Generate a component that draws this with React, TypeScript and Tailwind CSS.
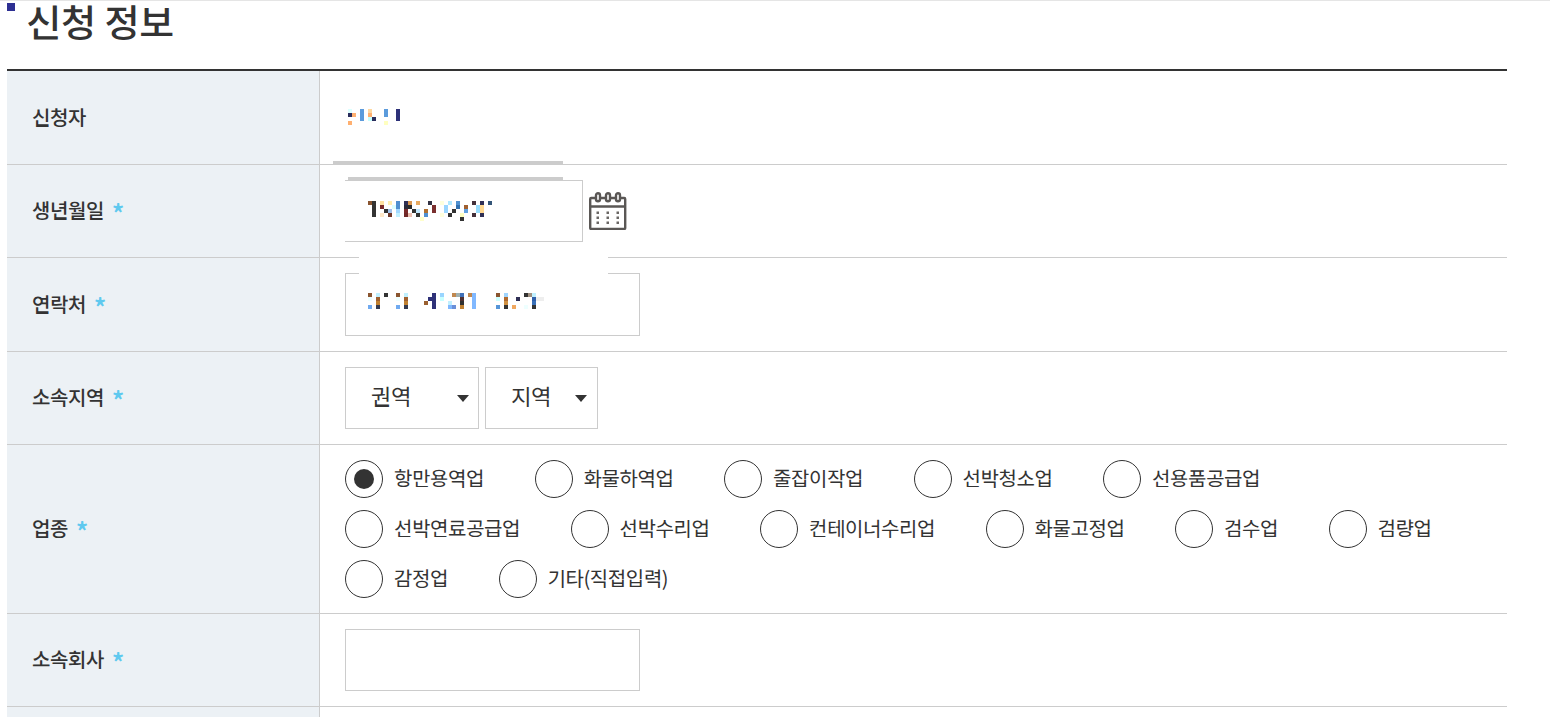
const NAME: [number, number, string][] = [
  [0, 0, "#dcffff"], [3, 0, "#5b9bdc"], [5, 0, "#ffd8a0"], [9, 0, "#5b9bdc"], [12, 0, "#2d3178"],
  [0, 1, "#2a2d5c"], [1, 1, "#ffb070"], [3, 1, "#5b9bdc"], [5, 1, "#ffb070"], [9, 1, "#5b9bdc"], [12, 1, "#2d3178"],
  [3, 2, "#5b9bdc"], [5, 2, "#c8ffff"], [6, 2, "#2a2d5c"], [12, 2, "#2d3178"],
  [0, 3, "#ffb070"], [9, 3, "#ffffc0"],
];

const BIRTH: [number, number, string][] = [
  [0, 0, "#8a5530"], [1, 0, "#333333"], [3, 0, "#ffe0a0"], [5, 0, "#ffeeb0"], [7, 0, "#4f90d0"], [9, 0, "#2f2f55"], [10, 0, "#d9954f"], [12, 0, "#e8aa60"], [15, 0, "#333344"], [18, 0, "#ffffdd"], [20, 0, "#b0e8ff"], [22, 0, "#4f90d0"], [26, 0, "#44303a"], [28, 0, "#2f2f55"], [30, 0, "#335577"],
  [1, 1, "#333333"], [3, 1, "#7a2a2a"], [6, 1, "#ddffff"], [7, 1, "#4f90d0"], [9, 1, "#2a2a3a"], [10, 1, "#2a2a2a"], [16, 1, "#7a2f2f"], [19, 1, "#99d5ff"], [22, 1, "#3070b0"], [24, 1, "#a06030"], [27, 1, "#99ddff"], [28, 1, "#ffd890"],
  [1, 2, "#333333"], [4, 2, "#333333"], [5, 2, "#a0c0e8"], [7, 2, "#a0d8ff"], [9, 2, "#7a2a2a"], [11, 2, "#333333"], [12, 2, "#c0e8ff"], [14, 2, "#b07030"], [16, 2, "#7a2f2f"], [19, 2, "#99d5ff"], [21, 2, "#333333"], [24, 2, "#60a0e0"], [27, 2, "#99ddff"], [28, 2, "#ffd890"],
  [1, 3, "#333333"], [3, 3, "#ffe8c8"], [5, 3, "#703828"], [7, 3, "#c0f0ff"], [9, 3, "#702828"], [10, 3, "#eec0b0"], [12, 3, "#333333"], [14, 3, "#4f90d0"], [18, 3, "#ffffdd"], [20, 3, "#333333"], [23, 3, "#ffffc0"], [26, 3, "#44303a"], [28, 3, "#2f2f55"],
  [13, 4, "#ffffcc"], [23, 4, "#333333"],
];

const PHONE: [number, number, string][] = [
  [0, 0, "#8a5530"], [2, 0, "#c0f0ff"], [4, 0, "#333333"], [7, 0, "#8a5530"], [9, 0, "#c0f0ff"], [16, 0, "#2f3178"], [18, 0, "#99d5ff"], [21, 0, "#c08850"], [22, 0, "#a0b0b0"], [23, 0, "#4070b8"], [25, 0, "#c08850"], [26, 0, "#80b8ff"], [32, 0, "#8a5530"], [34, 0, "#a0d5ff"], [39, 0, "#333333"], [40, 0, "#a09080"], [41, 0, "#c0f0ff"],
  [0, 1, "#eeffff"], [2, 1, "#a06030"], [7, 1, "#eeffff"], [9, 1, "#a06030"], [15, 1, "#2f3178"], [16, 1, "#2f3178"], [18, 1, "#c8ffff"], [23, 1, "#503030"], [26, 1, "#80b8ff"], [32, 1, "#ccffff"], [34, 1, "#b06a30"], [37, 1, "#2f2f55"], [41, 1, "#2f5faa"], [42, 1, "#eeeeee"], [43, 1, "#eeeeee"],
  [2, 2, "#c08030"], [9, 2, "#c08030"], [14, 2, "#9a6030"], [16, 2, "#2f3178"], [20, 2, "#c0f0ff"], [23, 2, "#303030"], [26, 2, "#80b8ff"], [34, 2, "#d09040"], [41, 2, "#3a70b8"],
  [0, 3, "#70aaf0"], [2, 3, "#333a50"], [7, 3, "#70aaf0"], [9, 3, "#333a50"], [16, 3, "#2f3178"], [20, 3, "#80b8ff"], [21, 3, "#6a90d8"], [23, 3, "#c08030"], [26, 3, "#80b8ff"], [32, 3, "#5595d8"], [34, 3, "#333333"], [36, 3, "#f0a860"], [39, 3, "#eeffff"], [41, 3, "#333333"],
];

const JOBS = [
  "항만용역업", "화물하역업", "줄잡이작업", "선박청소업", "선용품공급업",
  "선박연료공급업", "선박수리업", "컨테이너수리업", "화물고정업", "검수업", "검량업",
  "감정업", "기타(직접입력)",
];

// blurred-out personal data in the reference
const Mosaic = ({ cells, cols, rows }: { cells: [number, number, string][]; cols: number; rows: number }) => (
  <svg width={cols * 4} height={rows * 4} shapeRendering="crispEdges" className="block">
    {cells.map(([x, y, c], i) => (
      <rect key={i} x={x * 4} y={y * 4} width={4} height={4} fill={c} />
    ))}
  </svg>
);

const Row = ({ label, required, height, children }: { label: string; required?: boolean; height: string; children: React.ReactNode }) => (
  <div className={`flex border-b border-[#cccccc] ${height}`}>
    <div className="w-[313px] shrink-0 flex items-center pl-[25px] pb-[2px] bg-[#ecf1f5] border-r border-[#cccccc] text-[20px] font-medium tracking-[-0.4px] text-[#333333]">
      {label}
      {required && <span className="ml-[8px] mt-[4px] text-[24px] font-bold leading-none text-[#5fc9ef]">*</span>}
    </div>
    <div className="flex-1 min-w-0 flex items-center pl-[25px] pr-[25px]">{children}</div>
  </div>
);

const Select = ({ label, width, gap }: { label: string; width: string; gap: string }) => (
  <div className={`${width} h-[62px] flex items-center justify-between border border-[#cccccc] pl-[25px] ${gap} text-[22px] tracking-[-0.25px] text-[#333333]`}>
    <span className="pb-[5px]">{label}</span>
    <svg width="12" height="7" viewBox="0 0 12 7" className="mt-[1px]">
      <path d="M0 0h12L6 7z" fill="#333333" />
    </svg>
  </div>
);

const CalendarIcon = () => (
  <svg width="38" height="38" viewBox="0 0 38 38" fill="none" stroke="#5a5755" strokeWidth="2.400">
    <rect x="1.200" y="6" width="35" height="31" rx="1" />
    <path d="M1 14.500h35" />
    <rect x="7" y="1.200" width="4" height="8" rx="2" fill="#ffffff" />
    <rect x="17" y="1.200" width="4" height="8" rx="2" fill="#ffffff" />
    <rect x="27" y="1.200" width="4" height="8" rx="2" fill="#ffffff" />
    <g fill="#6a6765" stroke="none">
      <rect x="7.500" y="19.500" width="2.500" height="2.500" />
      <rect x="17.500" y="19.500" width="2.500" height="2.500" />
      <rect x="27.500" y="19.500" width="2.500" height="2.500" />
      <rect x="7.500" y="24.500" width="2.500" height="2.500" />
      <rect x="17.500" y="24.500" width="2.500" height="2.500" />
      <rect x="27.500" y="24.500" width="2.500" height="2.500" />
      <rect x="7.500" y="29.500" width="2.500" height="2.500" />
      <rect x="17.500" y="29.500" width="2.500" height="2.500" />
      <rect x="27.500" y="29.500" width="2.500" height="2.500" />
    </g>
  </svg>
);

export default function App() {
  return (
    <div className="relative h-[717px] overflow-hidden bg-white border-t border-[#e5e5e5] font-['Noto_Sans_KR','Noto_Sans_CJK_KR',sans-serif] text-[#333333]">
      {/* stray overlays left over on the page */}
      <div className="absolute left-[333px] top-[160px] w-[230px] h-[4px] bg-[#cccccc] z-10" />
      <div className="absolute left-[345px] top-[180px] w-[3px] h-[60px] bg-white z-10" />
      <div className="absolute left-[348px] top-[176px] w-[215px] h-[4px] bg-[#cccccc] z-10" />
      <div className="absolute left-[359px] top-[242px] w-[249px] h-[31px] bg-white z-10" />

      <div className="ml-[7px] w-[1500px]">
        <div className="h-[68px] flex items-start">
          <div className="mt-[2px] w-[8px] h-[8px] bg-[#2d2f92]" />
          <h2 className="ml-[11px] text-[38px] leading-[40px] font-medium text-[#333333]">신청 정보</h2>
        </div>

        <div className="border-t-2 border-[#333333]">
          <Row label="신청자" height="h-[94px]">
            <div className="-mt-[2px] ml-[3px]"><Mosaic cells={NAME} cols={13} rows={4} /></div>
          </Row>
          <Row label="생년월일" required height="h-[93px]">
            <div className="flex items-center">
              <div className="w-[238px] h-[62px] flex items-center pl-[22px] border border-[#cccccc] bg-white">
                <Mosaic cells={BIRTH} cols={31} rows={5} />
              </div>
              <div className="ml-[6px]"><CalendarIcon /></div>
            </div>
          </Row>
          <Row label="연락처" required height="h-[94px]">
            <div className="w-[295px] h-[63px] flex items-center pl-[22px] border border-[#cccccc]">
              <div className="-mt-[7px]"><Mosaic cells={PHONE} cols={44} rows={4} /></div>
            </div>
          </Row>
          <Row label="소속지역" required height="h-[93px]">
            <div className="flex gap-[6px]">
              <Select label="권역" width="w-[134px]" gap="pr-[9px]" />
              <Select label="지역" width="w-[113px]" gap="pr-[10px]" />
            </div>
          </Row>
          <Row label="업종" required height="h-[169px]">
            <div className="flex flex-wrap gap-x-[50px] gap-y-[12px]">
              {JOBS.map((job, i) => (
                <div key={job} className="flex items-center gap-[11px] h-[38px] text-[20px] tracking-[-0.4px] text-[#333333]">
                  <span className="w-[38px] h-[38px] rounded-full border border-[#333333] flex items-center justify-center">
                    {i === 0 && <span className="w-[20px] h-[20px] rounded-full bg-[#333333]" />}
                  </span>
                  <span className="pr-[0.5px] pb-[3px]">{job}</span>
                </div>
              ))}
            </div>
          </Row>
          <Row label="소속회사" required height="h-[93px]">
            <div className="w-[295px] h-[62px] border border-[#cccccc]" />
          </Row>
          <div className="flex h-[40px]">
            <div className="w-[313px] bg-[#ecf1f5] border-r border-[#cccccc]" />
          </div>
        </div>
      </div>
    </div>
  );
}
